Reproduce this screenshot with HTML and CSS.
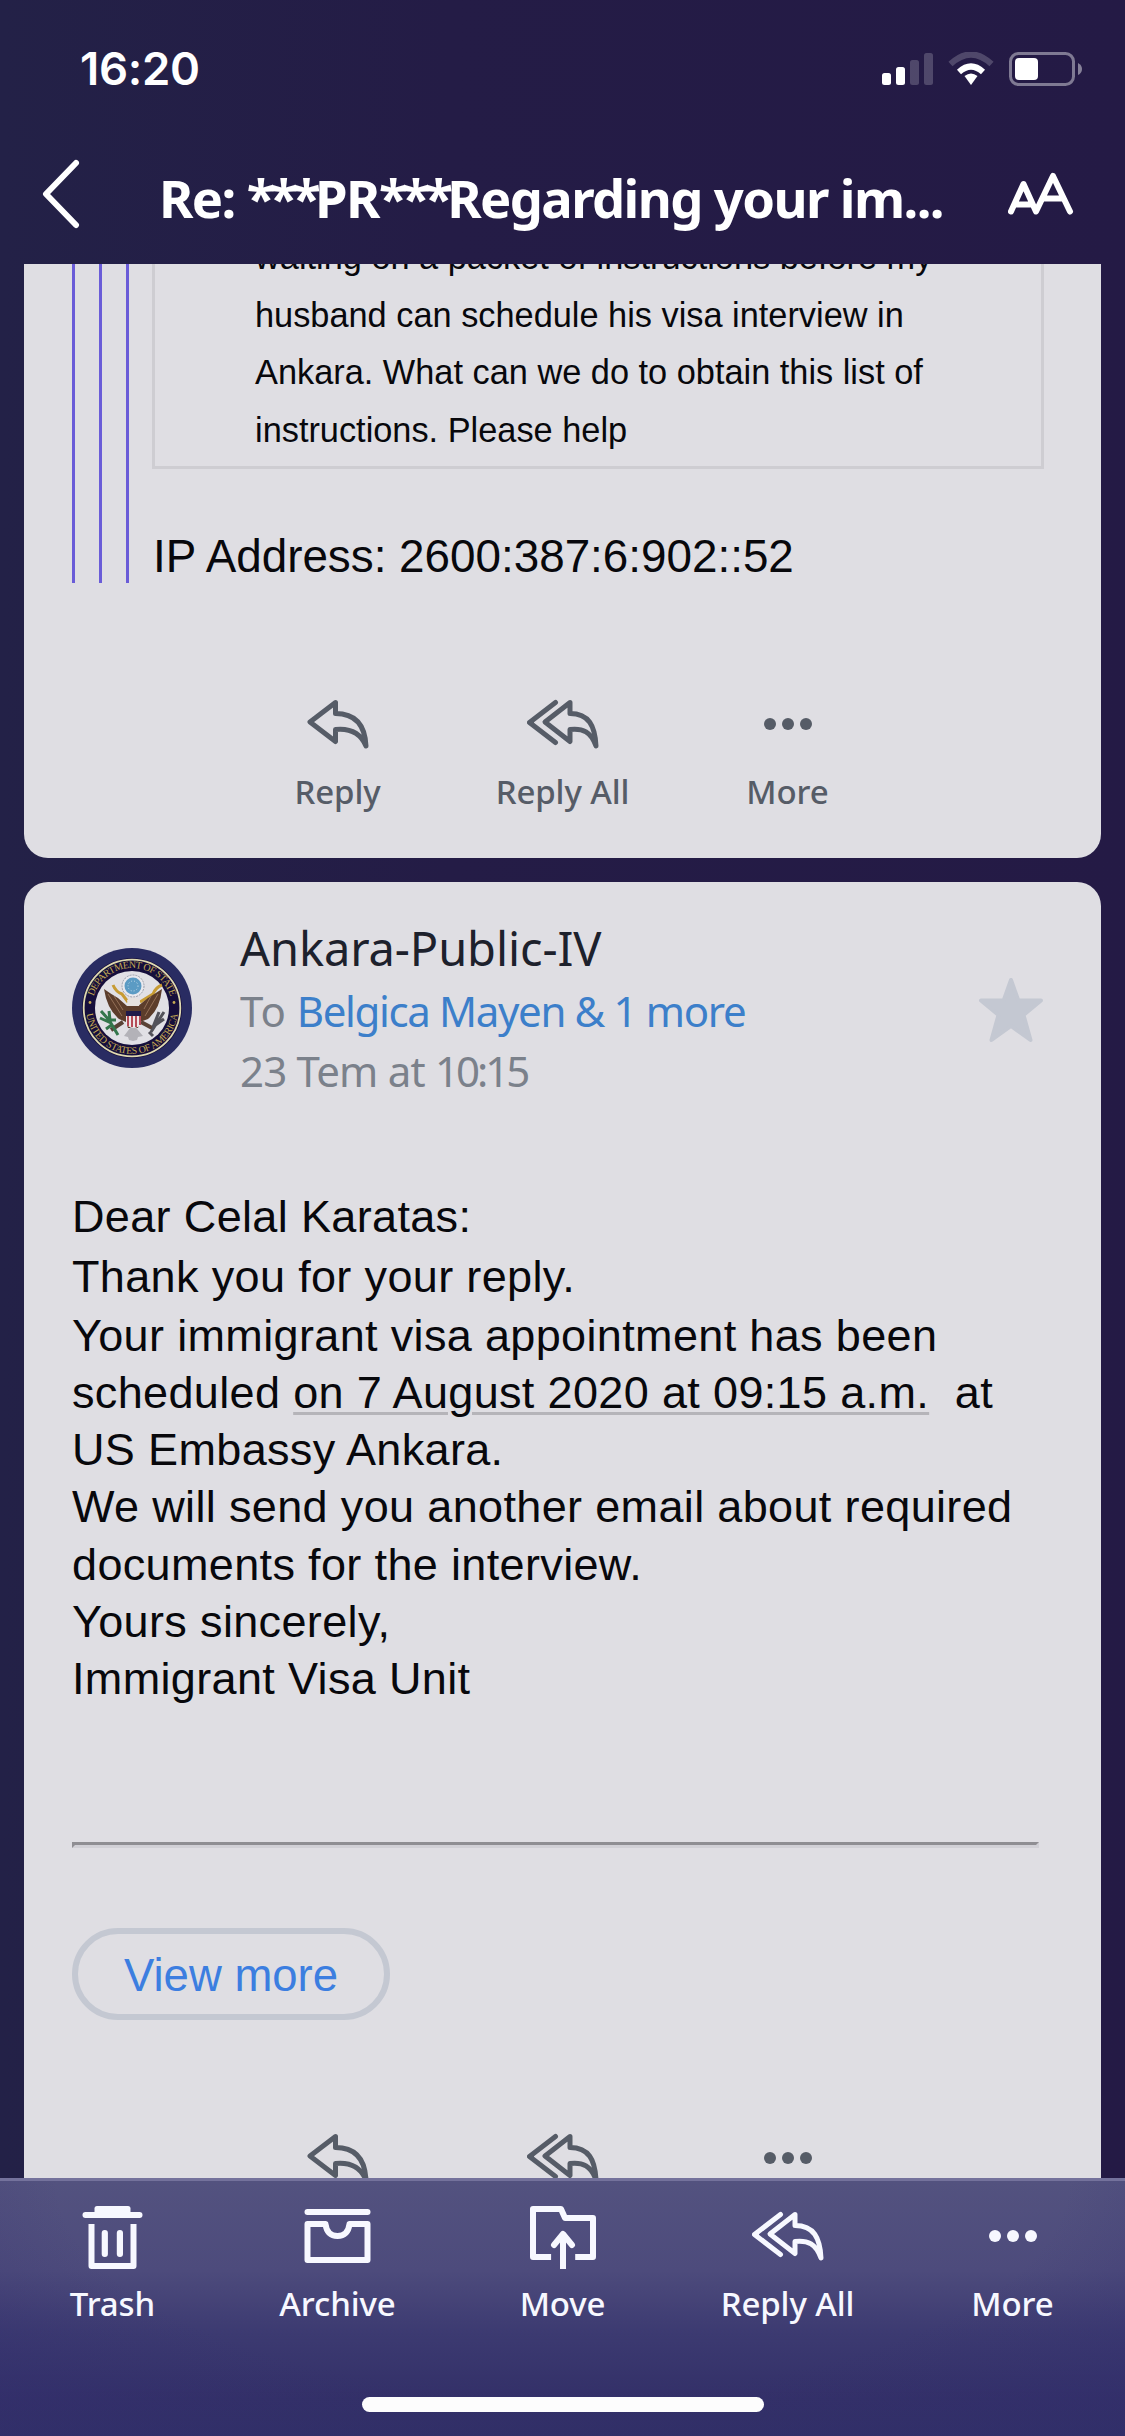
FILE: index.html
```html
<!DOCTYPE html>
<html lang="en">
<head>
    <meta charset="UTF-8">
    <meta name="viewport" content="width=device-width, initial-scale=1.0">
    <title>Mail</title>
    <link rel="stylesheet" href="styles.css">
</head>
<body>
<svg class="sprite">
    <symbol id="reply" viewBox="1 0 72 72">
        <path class="line" d="M34.500 14.500 9 34l25.500 19.500v-12C50 40 60 46 65 58 64 38 55 25.500 34.500 25.500Z"/>
    </symbol>
    <symbol id="reply-all" viewBox="1 0 72 72">
        <path class="line" d="M29.500 14.500 3.500 34.500l26 20"/>
        <path d="M2 34.500l7-5q-2 5 0 10Z"/>
        <path class="line" d="M44 14.500 19 34l25 19.500v-12C57 40 65 44 70 58 69 38 63 25.500 44 25.500Z"/>
    </symbol>
    <symbol id="more" viewBox="0 0 72 72">
        <circle cx="18" cy="36" r="6"/>
        <circle cx="36" cy="36" r="6"/>
        <circle cx="54" cy="36" r="6"/>
    </symbol>
    <symbol id="trash" viewBox="1 0 72 72">
        <path d="M18.500 13V8.500q0-2.500 2.500-2.500h31q2.500 0 2.500 2.500V13Z"/>
        <rect x="6.500" y="12" width="60" height="6" rx="3"/>
        <path class="bold" d="M15.500 24v42h42V24"/>
        <rect x="25.700" y="30" width="6.200" height="27" rx="3"/>
        <rect x="40.800" y="30" width="6.200" height="27" rx="3"/>
    </symbol>
    <symbol id="archive" viewBox="1 0 72 72">
        <rect x="3.500" y="9" width="66" height="6" rx="3"/>
        <path class="bold" d="M6.500 24h18c1 8 5 12 12 12s11-4 12-12h18v36h-60Z"/>
    </symbol>
    <symbol id="move" viewBox="0.500 0 72 72">
        <path class="bold" d="M24.600 57H6.500V9h28l4 9h28v39H48.700M36.500 69V35"/>
        <path class="bold round" d="M27.500 45l9-11 9 11"/>
    </symbol>
</svg>
<div id="box">
    <header>
        <div class="status">
            <span class="time">16:20</span>
            <svg class="signals" viewBox="0 0 200 34">
                <g fill="#fff">
                    <rect x="0" y="21" width="9" height="12" rx="2.500"/>
                    <rect x="14" y="15" width="9" height="18" rx="2.500"/>
                    <rect x="28" y="8" width="9" height="25" rx="2.500" opacity=".2"/>
                    <rect x="42" y="1" width="9" height="32" rx="2.500" opacity=".2"/>
                    <path d="M82.500 24q6.500-5 13 0l-6.500 9Z"/>
                    <rect x="133" y="6" width="23" height="22" rx="4"/>
                    <path d="M196 11q4 2 4 6t-4 6Z" opacity=".45"/>
                </g>
                <path d="M77 20q12-11 24 0" fill="none" stroke="#fff" stroke-width="6"/>
                <path d="M68.500 12q20.500-19 41 0" fill="none" stroke="#fff" stroke-width="6" opacity=".2"/>
                <rect x="128.500" y="1.500" width="63" height="31" rx="8" fill="none" stroke="#fff" stroke-width="3" opacity=".42"/>
            </svg>
        </div>
        <div class="nav">
            <svg class="back" viewBox="0 0 40 72"><path d="M36 5 6 36l30 31"/></svg>
            <h1>Re: <span>***</span>PR<span>***</span>Regarding your im...</h1>
            <svg class="size" viewBox="0 0 66 44"><path d="M3 39.500 15.500 12 28 39.500 45 4l17 35.500M9 32.500h13M35 26.500h20"/></svg>
        </div>
    </header>
    <section>
        <article class="first">
            <blockquote><blockquote><blockquote>
                <div class="frame">waiting on a packet of instructions before my<br>husband can schedule his visa interview in<br>Ankara. What can we do to obtain this list of<br>instructions. Please help</div>
                <p class="ip">IP Address: 2600:387:6:902::52</p>
            </blockquote></blockquote></blockquote>
            <div class="actions">
                <a><svg><use href="#reply"/></svg><span>Reply</span></a>
                <a><svg><use href="#reply-all"/></svg><span>Reply All</span></a>
                <a><svg><use href="#more"/></svg><span>More</span></a>
            </div>
        </article>
        <article class="second">
            <div class="sender">
                <svg class="seal" viewBox="0 0 120 120">
                    <defs>
                        <path id="arc-top" d="M20 60a40 40 0 0 1 80 0"/>
                        <path id="arc-bottom" d="M14 60a46 46 0 0 0 92 0"/>
                    </defs>
                    <circle cx="60" cy="60" r="60" fill="#292c62"/>
                    <circle cx="60" cy="60" r="50" fill="#160f3c"/>
                    <circle cx="60" cy="60" r="48.300" fill="none" stroke="#ded9b0" stroke-width="1.800"/>
                    <circle cx="60" cy="60" r="37" fill="#e1e0e5"/>
                    <g fill="#c5aa52">
                        <text textLength="102"><textPath href="#arc-top" startOffset="50%">DEPARTMENT OF STATE</textPath></text>
                        <text textLength="132"><textPath href="#arc-bottom" startOffset="50%">UNITED STATES OF AMERICA</textPath></text>
                        <circle cx="18" cy="54.500" r="1.400"/>
                        <circle cx="102" cy="54.500" r="1.400"/>
                    </g>
                    <circle cx="61" cy="38" r="11" fill="#e9e9ee" stroke="#999ca8" stroke-dasharray="2 1"/>
                    <circle cx="61" cy="38" r="8.500" fill="#5b9bc4"/>
                    <circle cx="61" cy="38" r="5" fill="none" stroke="#c5dcea" stroke-dasharray="1 2"/>
                    <path d="M41 37q3 7 9 9l6 8M90 37q-6 2-9 9l-13 8" fill="none" stroke="#c79b34" stroke-width="3"/>
                    <path d="M32 41q7 5 14 9l9 8 11 0 10-8 14-9q-2 20-14 30l-8 3-2 6H56l-2-6-7-3Q35 61 32 41Z" fill="#5c3d2b"/>
                    <path d="M36 46l14 22M42 48l9 14M86 46 73 68M79 48l-7 13" stroke="#947057" fill="none"/>
                    <path d="M55 52q7-5 13 0l-1 6H56Z" fill="#e5e1df"/>
                    <path d="M51 74l-12 8M69 74l13 7" stroke="#594236" stroke-width="4"/>
                    <path d="M29 63l8 9 9 15M28 70l11 5M34 81l7-5M37 63l1 9 6 0" fill="none" stroke="#34764b" stroke-width="3"/>
                    <path d="M92 64 79 84M87 64l-6 15M92 71 82 78M77 84l4 4" fill="none" stroke="#53525a" stroke-width="3"/>
                    <path d="M61 76 52 88l4 1 1 3 4 1 4-1 1-3 5-1Z" fill="#b3b2b8"/>
                    <path d="M54 63h15v14q-7 6-15 0Z" fill="#eee8e9"/>
                    <path d="M56 68v10M60 68v11M64 68v11M68 68v9" stroke="#b64c58" stroke-width="2"/>
                    <path d="M54 63h15v5H54Z" fill="#211a49"/>
                </svg>
                <div class="who">
                    <h2>Ankara-Public-IV</h2>
                    <p>To <a>Belgica Mayen &amp; 1 more</a></p>
                    <p class="date">23 Tem at <span>10:15</span></p>
                </div>
                <svg class="star" viewBox="0 0 72 72"><path d="M36 6l7.300 20.500H66L48.500 41l7 25L36 52 16.500 66l7-25L6 26.500h22.700Z"/></svg>
            </div>
            <div class="letter">
                <p class="dear">Dear Celal Karatas:</p>
                <p class="thanks">Thank you for your reply.</p>
                <p>Your immigrant visa appointment has been<br>scheduled <u>on 7 August 2020 at 09:15 a.m.</u>&nbsp; at<br>US Embassy Ankara.<br>We will send you another email about required<br>documents for the interview.<br>Yours sincerely,<br>Immigrant Visa Unit</p>
            </div>
            <hr>
            <a class="view">View more</a>
            <div class="actions">
                <a><svg><use href="#reply"/></svg></a>
                <a><svg><use href="#reply-all"/></svg></a>
                <a><svg><use href="#more"/></svg></a>
            </div>
        </article>
    </section>
    <footer>
        <div class="actions">
            <a><svg><use href="#trash"/></svg><span>Trash</span></a>
            <a><svg><use href="#archive"/></svg><span>Archive</span></a>
            <a><svg><use href="#move"/></svg><span>Move</span></a>
            <a><svg><use href="#reply-all"/></svg><span>Reply All</span></a>
            <a><svg><use href="#more"/></svg><span>More</span></a>
        </div>
        <div class="home"></div>
    </footer>
</div>
</body>
</html>
```
FILE: styles.css
```css
*{margin: 0;padding: 0;box-sizing: border-box;}
body{font-family: "Noto Sans", sans-serif;}
.sprite{display: none;}
#box{
    width: 1125px;
    height: 2436px;
    overflow: hidden;
    display: flex;
    flex-direction: column;
    background: linear-gradient(90deg, #232147, #241c46 40%, #241a45);
}

/* header */
header{
    height: 264px;
    padding-top: 38px;
    color: #fff;
}
.status{
    height: 60px;
    padding: 0 43px 0 80px;
    display: flex;
    align-items: center;
    justify-content: space-between;
}
.time{
    font: 600 45.500px/60px Inter, sans-serif;
    letter-spacing: -.3px;
    margin-top: 2px;
}
.signals{
    width: 200px;
    height: 34px;
    margin-top: 2px;
}
.nav{
    margin-top: 58px;
    height: 76px;
    padding: 0 51px 0 40px;
    display: flex;
    align-items: center;
}
.back{width: 40px;height: 72px;}
.back path,.size path{
    fill: none;
    stroke: #fff;
    stroke-width: 6;
    stroke-linecap: round;
    stroke-linejoin: round;
}
.size{width: 66px;height: 44px;}
.nav h1{
    flex: 1;
    margin-left: 79px;
    font-size: 52.500px;
    line-height: 72px;
    font-weight: 700;
    white-space: nowrap;
    letter-spacing: -1.600px;
    margin-top: 8px;
}
.nav h1 span{letter-spacing: -5.700px;}

/* thread */
section{
    height: 1914px;
    overflow: hidden;
    padding: 0 24px;
}
article{
    background: #dfdee3;
    overflow: hidden;
    color: #08080c;
}
.first{
    height: 594px;
    border-radius: 0 0 24px 24px;
}
.second{
    margin-top: 24px;
    height: 1400px;
    padding-top: 36px;
    border-radius: 24px;
}
blockquote{
    border-left: 3px solid #6a5cd8;
    padding-left: 24px;
}
.first > blockquote{margin-left: 48px;}
.frame{
    width: 892px;
    height: 205px;
    border: 3px solid #cecdd2;
    border-top: 0;
    margin-left: -1px;
    padding-left: 100px;
    font: 34.350px/57.500px "Liberation Sans", Arial, sans-serif;
    display: flow-root;
}
.frame::before{
    content: "";
    display: block;
    margin-top: -35px;
}
.ip{
    margin-top: 60px;
    font: 45.800px/54px "Liberation Sans", Arial, sans-serif;
    padding-top: 1px;
    height: 54px;
}
.actions{
    display: flex;
    justify-content: center;
    color: #565c67;
}
.actions a{
    width: 225px;
    display: flex;
    flex-direction: column;
    align-items: center;
    gap: 12px;
}
.actions svg{
    width: 72px;
    height: 72px;
    fill: currentColor;
    stroke: none;
}
.line,.bold{
    fill: none;
    stroke: currentColor;
    stroke-width: 5;
    stroke-linejoin: round;
    stroke-linecap: round;
}
.bold{stroke-width: 6;stroke-linecap: butt;}
.round{stroke-linecap: round;}
.actions span{
    font-size: 33px;
    line-height: 40px;
    font-weight: 500;
    letter-spacing: -.1px;
}
.first .actions{margin-top: 105px;}

.sender{
    display: flex;
    align-items: flex-start;
    padding: 0 54px 0 48px;
}
.seal{width: 120px;height: 120px;margin-top: 30px;}
.seal text{
    font: 10px "Liberation Serif", serif;
    text-anchor: middle;
}
.who{flex: 1;margin-left: 48px;}
.who h2{
    font-size: 47px;
    line-height: 60px;
    font-weight: 400;
    color: #1d212c;
    letter-spacing: -.1px;
    margin-bottom: 3px;
}
.who p{
    font-size: 42px;
    line-height: 60px;
    color: #7b818b;
}
.who a{
    color: #3c7fca;
    letter-spacing: -1.350px;
}
.who .date{letter-spacing: -.8px;}
.date span{letter-spacing: -3px;}
.star{
    width: 72px;
    height: 72px;
    margin-top: 56px;
}
.star path{
    fill: #c4c8d2;
    stroke: #c4c8d2;
    stroke-width: 4;
    stroke-linejoin: round;
}
.letter{
    margin: 85.400px 0 0 48px;
    font: 45px/57.200px "Liberation Sans", Arial, sans-serif;
    letter-spacing: .350px;
    white-space: nowrap;
}
.dear{line-height: 61.400px;}
.thanks{line-height: 58px;margin-bottom: 1px;}
.letter u{
    text-decoration-color: #b5b4b9;
    text-decoration-thickness: 3px;
    text-underline-offset: 4px;
}
hr{
    width: 967px;
    height: 6px;
    margin: 134.800px 0 80px 48px;
    border: 3px solid;
    border-color: #8f8e93 #d1d0d6 #d1d0d6 #8f8e93;
}
.view{
    display: block;
    width: 318px;
    height: 92px;
    margin-left: 48px;
    border: 6px solid #c4c8d2;
    border-radius: 46px;
    text-align: center;
    font: 45.500px/83px "Liberation Sans", Arial, sans-serif;
    color: #3c7ee0;
}
.second .actions{margin-top: 102px;}

/* toolbar */
footer{
    height: 258px;
    border-top: 3px solid #74729c;
    padding-top: 19px;
    background: radial-gradient(ellipse 720px 300px at 50% 0, transparent 70%, rgba(50,46,110,.35)),
        linear-gradient(#53527f, #4d4b7c 35%, #3c3a71 60%, #333068 85%, #312f66);
}
footer .actions{color: #f7f8ff;}
.home{
    width: 402px;
    height: 15px;
    margin: 73px auto 0;
    border-radius: 8px;
    background: #fdfdfd;
}
```
